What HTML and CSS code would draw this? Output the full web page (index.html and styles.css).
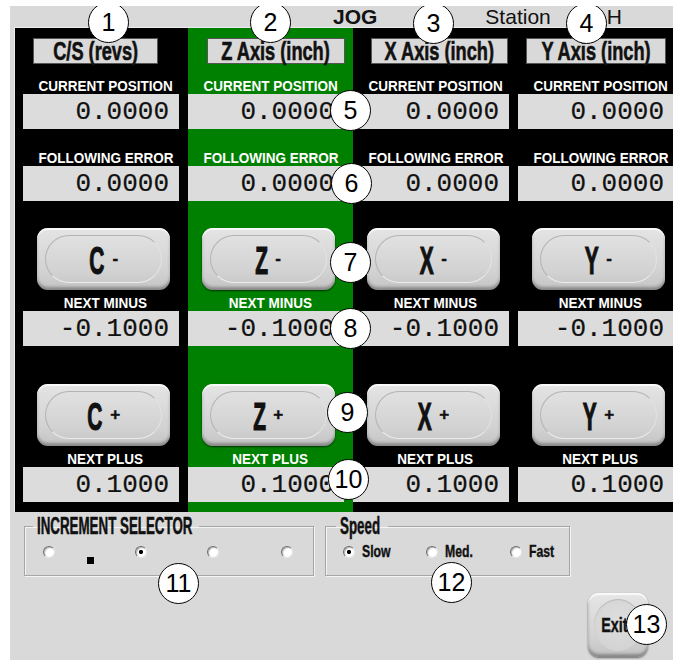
FILE: index.html
```html
<!DOCTYPE html>
<html lang="en">
<head>
  <meta charset="UTF-8">
  <title>Jog</title>
  <link rel="stylesheet" href="styles.css">
</head>
<body>
  <div class="app">
    <div class="title-bar">
      <span class="title-jog">JOG</span>
      <span class="title-station">Station</span>
      <span class="title-id">H</span>
    </div>

    <div class="panel">
      <div class="axis axis-c">
        <div class="axis-title"><span class="title-text">C/S (revs)</span></div>
        <div class="cap"><span>CURRENT POSITION</span></div>
        <div class="readout">0.0000</div>
        <div class="cap"><span>FOLLOWING ERROR</span></div>
        <div class="readout">0.0000</div>
        <button class="jog jog-minus"><span class="jog-face"><span class="jog-letter">C</span><span class="jog-sign">-</span></span></button>
        <div class="cap"><span>NEXT MINUS</span></div>
        <div class="readout">-0.1000</div>
        <button class="jog jog-plus"><span class="jog-face"><span class="jog-letter">C</span><span class="jog-sign">+</span></span></button>
        <div class="cap"><span>NEXT PLUS</span></div>
        <div class="readout">0.1000</div>
      </div>

      <div class="axis axis-z">
        <div class="axis-title"><span class="title-text">Z Axis (inch)</span></div>
        <div class="cap"><span>CURRENT POSITION</span></div>
        <div class="readout">0.0000</div>
        <div class="cap"><span>FOLLOWING ERROR</span></div>
        <div class="readout">0.0000</div>
        <button class="jog jog-minus"><span class="jog-face"><span class="jog-letter">Z</span><span class="jog-sign">-</span></span></button>
        <div class="cap"><span>NEXT MINUS</span></div>
        <div class="readout">-0.1000</div>
        <button class="jog jog-plus"><span class="jog-face"><span class="jog-letter">Z</span><span class="jog-sign">+</span></span></button>
        <div class="cap"><span>NEXT PLUS</span></div>
        <div class="readout">0.1000</div>
      </div>

      <div class="axis axis-x">
        <div class="axis-title"><span class="title-text">X Axis (inch)</span></div>
        <div class="cap"><span>CURRENT POSITION</span></div>
        <div class="readout">0.0000</div>
        <div class="cap"><span>FOLLOWING ERROR</span></div>
        <div class="readout">0.0000</div>
        <button class="jog jog-minus"><span class="jog-face"><span class="jog-letter">X</span><span class="jog-sign">-</span></span></button>
        <div class="cap"><span>NEXT MINUS</span></div>
        <div class="readout">-0.1000</div>
        <button class="jog jog-plus"><span class="jog-face"><span class="jog-letter">X</span><span class="jog-sign">+</span></span></button>
        <div class="cap"><span>NEXT PLUS</span></div>
        <div class="readout">0.1000</div>
      </div>

      <div class="axis axis-y">
        <div class="axis-title"><span class="title-text">Y Axis (inch)</span></div>
        <div class="cap"><span>CURRENT POSITION</span></div>
        <div class="readout">0.0000</div>
        <div class="cap"><span>FOLLOWING ERROR</span></div>
        <div class="readout">0.0000</div>
        <button class="jog jog-minus"><span class="jog-face"><span class="jog-letter">Y</span><span class="jog-sign">-</span></span></button>
        <div class="cap"><span>NEXT MINUS</span></div>
        <div class="readout">-0.1000</div>
        <button class="jog jog-plus"><span class="jog-face"><span class="jog-letter">Y</span><span class="jog-sign">+</span></span></button>
        <div class="cap"><span>NEXT PLUS</span></div>
        <div class="readout">0.1000</div>
      </div>
    </div>

    <div class="controls">
      <fieldset class="group group-inc">
        <legend><span class="legend-text">INCREMENT SELECTOR</span></legend>
        <div class="inc-row">
          <div class="inc-cell"><span class="radio"></span><span class="tick"></span></div>
          <div class="inc-cell"><span class="radio checked"></span></div>
          <div class="inc-cell"><span class="radio"></span></div>
          <div class="inc-cell"><span class="radio"></span></div>
        </div>
      </fieldset>

      <fieldset class="group group-speed">
        <legend><span class="legend-text">Speed</span></legend>
        <div class="speed-row">
          <div class="speed-opt"><span class="radio checked"></span><span class="opt-text">Slow</span></div>
          <div class="speed-opt"><span class="radio"></span><span class="opt-text">Med.</span></div>
          <div class="speed-opt"><span class="radio"></span><span class="opt-text">Fast</span></div>
        </div>
      </fieldset>

      <button class="exit"><span class="exit-face"><span class="exit-text">Exit</span></span></button>
    </div>

    <!-- numbered callouts -->
    <div class="marker m1">1</div>
    <div class="marker m2">2</div>
    <div class="marker m3">3</div>
    <div class="marker m4">4</div>
    <div class="marker m5">5</div>
    <div class="marker m6">6</div>
    <div class="marker m7">7</div>
    <div class="marker m8">8</div>
    <div class="marker m9">9</div>
    <div class="marker m10">10</div>
    <div class="marker m11">11</div>
    <div class="marker m12">12</div>
    <div class="marker m13">13</div>
  </div>
</body>
</html>
```

FILE: styles.css
```css
* {
  box-sizing: border-box;
}
html, body {
  overflow: hidden;
}
body {
  margin: 6px 0 0 10px;
  background: #fff;
  font-family: "Liberation Sans", Arial, sans-serif;
  color: #111;
}
.app {
  position: relative;
  width: 663px;
  height: 654px;
  background: #d9d9d9;
}

/* top title */
.title-bar {
  display: flex;
  height: 21px;
  padding-left: 323px;
  font-size: 21px;
  line-height: 21px;
}
.title-jog {
  font-weight: bold;
}
.title-station {
  margin-left: 108px;
}
.title-id {
  margin-left: 56px;
}

/* axis panel */
.panel {
  display: grid;
  grid-template-columns: repeat(4, 165px);
  width: 659px;
  margin-left: 4px;
  padding-left: 8px;
  background: #000;
  border-top: 1px solid #ececec;
  border-left: 1px solid #ececec;
  overflow: hidden;
}
.axis {
  display: flex;
  flex-direction: column;
  padding: 10px 0;
}
.axis-z {
  background: #008000;
}
.axis-title {
  align-self: flex-start;
  display: flex;
  align-items: center;
  justify-content: center;
  height: 26px;
  width: 125px;
  margin-left: 10px;
  background: #d9d9d9;
  border: 1px solid #555;
}
.axis-z .axis-title {
  width: 138px;
  margin-left: 19px;
}
.axis-x .axis-title {
  width: 137px;
  margin-left: 18px;
}
.axis-y .axis-title {
  width: 140px;
  margin-left: 8px;
}
.title-text {
  display: inline-block;
  font-size: 26px;
  font-weight: bold;
  line-height: 24px;
  white-space: nowrap;
  transform: scaleX(0.7);
  -webkit-text-stroke: 0.6px #111;
}
.cap {
  height: 16px;
  font-size: 15px;
  font-weight: bold;
  line-height: 16px;
  color: #fff;
  text-align: center;
  white-space: nowrap;
}
.cap span {
  display: inline-block;
  transform: scaleX(0.9);
}
.axis-title + .cap {
  margin-top: 14px;
}
.readout + .cap {
  margin-top: 21px;
}
.jog + .cap {
  margin-top: 5px;
}
.readout {
  width: 156px;
  height: 35px;
  padding-right: 10px;
  background: #dcdcdc;
  font-family: "Liberation Mono", "Courier New", monospace;
  font-size: 26px;
  line-height: 36px;
  text-align: right;
  color: #111;
  -webkit-text-stroke: 0.2px #111;
}

/* jog buttons */
.jog {
  display: flex;
  width: 133px;
  height: 62px;
  margin-left: 14px;
  padding: 7px 8px;
  border: none;
  border-radius: 11px;
  background: linear-gradient(#e4e4e4, #d2d2d2 70%, #c4c4c4);
  box-shadow: inset 0 2px 1px rgba(255, 255, 255, 0.8), inset 0 -3px 3px rgba(0, 0, 0, 0.3), 0 1px 2px rgba(0, 0, 0, 0.6);
  font-family: inherit;
  cursor: pointer;
}
.jog-minus {
  margin-top: 27px;
}
.jog-plus {
  margin-top: 38px;
}
.jog-face {
  flex: 1;
  display: flex;
  align-items: center;
  justify-content: center;
  gap: 8px;
  border-radius: 24px;
  border: 1px solid #b4b4b4;
  border-bottom-color: #ececec;
  border-right-color: #e2e2e2;
}
.jog-letter {
  display: inline-block;
  margin: 4px -6px 0;
  font-size: 38px;
  font-weight: bold;
  line-height: 30px;
  color: #111;
  transform: scaleX(0.55);
  -webkit-text-stroke: 1.2px #111;
}
.jog-sign {
  font-size: 17px;
  font-weight: bold;
  line-height: 16px;
  color: #111;
  -webkit-text-stroke: 0.4px #111;
}

/* lower controls */
.controls {
  display: flex;
  align-items: flex-start;
  padding-left: 14px;
  margin-top: 4px;
}
.group {
  height: 60px;
  margin: 0;
  padding: 0;
  border: 1px solid #a6a6a6;
  box-shadow: 1px 1px 0 #f4f4f4, inset 1px 1px 0 #f4f4f4;
}
.group legend {
  padding: 0 0 0 4px;
  margin-left: 8px;
  height: 20px;
  line-height: 20px;
}
.group-inc {
  width: 290px;
}
.group-inc legend {
  width: 166px;
}
.group-speed {
  width: 245px;
  margin-left: 11px;
}
.group-speed legend {
  width: 52px;
  margin-left: 10px;
}
.legend-text {
  display: inline-block;
  font-size: 23px;
  font-weight: bold;
  white-space: nowrap;
  transform: scaleX(0.58);
  transform-origin: left center;
  -webkit-text-stroke: 0.5px #111;
}
.inc-row {
  display: grid;
  grid-template-columns: 92px 72px 74px 12px;
  padding: 10px 0 0 18px;
}
.inc-cell {
  display: flex;
  align-items: flex-start;
}
.tick {
  width: 7px;
  height: 7px;
  margin: 11px 0 0 32px;
  background: #000;
}
.speed-row {
  display: grid;
  grid-template-columns: 83px 84px auto;
  padding: 10px 0 0 17px;
}
.speed-opt {
  display: flex;
  align-items: center;
  gap: 7px;
}
.opt-text {
  display: inline-block;
  font-size: 17px;
  font-weight: bold;
  line-height: 12px;
  transform: scaleX(0.72);
  transform-origin: left center;
  -webkit-text-stroke: 0.4px #111;
}
.radio {
  flex: none;
  width: 12px;
  height: 12px;
  border-radius: 50%;
  background: #fff;
  border: 1px solid;
  border-color: #6e6e6e #e6e6e6 #e6e6e6 #6e6e6e;
  box-shadow: inset 1px 1px 1px rgba(0, 0, 0, 0.3);
}
.radio.checked {
  background: radial-gradient(circle, #000 0 1.8px, #fff 2.4px);
}

.exit {
  display: flex;
  width: 60px;
  height: 64px;
  margin: 77px 0 0 18px;
  padding: 6px;
  border: none;
  border-radius: 11px;
  background: linear-gradient(#e6e6e6, #d2d2d2 70%, #c2c2c2);
  box-shadow: inset 0 2px 1px rgba(255, 255, 255, 0.8), inset 0 -3px 3px rgba(0, 0, 0, 0.3), 0 1px 2px rgba(0, 0, 0, 0.5);
  font-family: inherit;
  cursor: pointer;
}
.exit-face {
  flex: 1;
  display: flex;
  align-items: center;
  justify-content: center;
  border-radius: 50%;
  background: radial-gradient(circle at 50% 40%, #dedede, #d0d0d0);
  box-shadow: inset 0 1px 1px rgba(0, 0, 0, 0.15);
}
.exit-text {
  display: inline-block;
  margin-left: -8px;
  font-size: 20px;
  font-weight: bold;
  transform: scaleX(0.72);
  color: #111;
  -webkit-text-stroke: 0.4px #111;
}

/* numbered callouts laid over the screen */
.marker {
  position: absolute;
  width: 41px;
  height: 41px;
  border: 1.5px solid #000;
  border-radius: 50%;
  background: #fff;
  font-family: "Liberation Sans", Arial, sans-serif;
  font-size: 25px;
  line-height: 38px;
  text-align: center;
  color: #000;
}
.m1 { left: 78px; top: -4px; }
.m2 { left: 240px; top: -4px; }
.m3 { left: 403px; top: -3px; }
.m4 { left: 556px; top: -3px; }
.m5 { left: 320px; top: 84px; }
.m6 { left: 321px; top: 157px; }
.m7 { left: 320px; top: 236px; }
.m8 { left: 320px; top: 302px; }
.m9 { left: 317px; top: 386px; }
.m10 { left: 318px; top: 453px; }
.m11 { left: 148px; top: 557px; }
.m12 { left: 421px; top: 556px; }
.m13 { left: 616px; top: 598px; }
```
